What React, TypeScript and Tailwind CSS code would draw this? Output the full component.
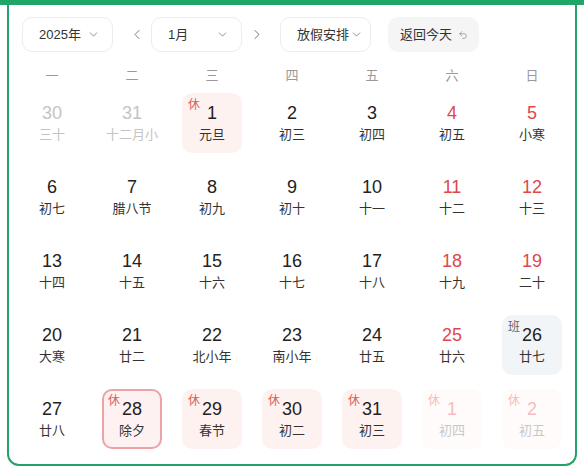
import { ChevronDown, ChevronLeft, ChevronRight, Undo2 } from 'lucide-react';

type Day = {
  n: number;
  lunar: string;
  kind?: 'prev' | 'next';
  weekend?: boolean;
  badge?: '休' | '班';
  selected?: boolean;
};

const weekdays = ['一', '二', '三', '四', '五', '六', '日'];

// January 2025, Monday first
const days: Day[] = [
  { n: 30, lunar: '三十', kind: 'prev' },
  { n: 31, lunar: '十二月小', kind: 'prev' },
  { n: 1, lunar: '元旦', badge: '休' },
  { n: 2, lunar: '初三' },
  { n: 3, lunar: '初四' },
  { n: 4, lunar: '初五', weekend: true },
  { n: 5, lunar: '小寒', weekend: true },
  { n: 6, lunar: '初七' },
  { n: 7, lunar: '腊八节' },
  { n: 8, lunar: '初九' },
  { n: 9, lunar: '初十' },
  { n: 10, lunar: '十一' },
  { n: 11, lunar: '十二', weekend: true },
  { n: 12, lunar: '十三', weekend: true },
  { n: 13, lunar: '十四' },
  { n: 14, lunar: '十五' },
  { n: 15, lunar: '十六' },
  { n: 16, lunar: '十七' },
  { n: 17, lunar: '十八' },
  { n: 18, lunar: '十九', weekend: true },
  { n: 19, lunar: '二十', weekend: true },
  { n: 20, lunar: '大寒' },
  { n: 21, lunar: '廿二' },
  { n: 22, lunar: '北小年' },
  { n: 23, lunar: '南小年' },
  { n: 24, lunar: '廿五' },
  { n: 25, lunar: '廿六', weekend: true },
  { n: 26, lunar: '廿七', badge: '班' },
  { n: 27, lunar: '廿八' },
  { n: 28, lunar: '除夕', badge: '休', selected: true },
  { n: 29, lunar: '春节', badge: '休' },
  { n: 30, lunar: '初二', badge: '休' },
  { n: 31, lunar: '初三', badge: '休' },
  { n: 1, lunar: '初四', badge: '休', kind: 'next' },
  { n: 2, lunar: '初五', badge: '休', kind: 'next' },
];

function Select({ label, wide }: { label: string; wide?: boolean }) {
  return (
    <div
      className={`flex h-[35px] w-[91px] items-center justify-between rounded-[10px] border border-[#ececec] pl-[16px] ${
        wide ? 'pr-[7px]' : 'pr-[12px]'
      } whitespace-nowrap text-[13px] text-[#333]`}
    >
      <span className="whitespace-nowrap">{label}</span>
      <ChevronDown className="h-[13px] w-[13px] shrink-0 text-[#777]" strokeWidth={1.5} />
    </div>
  );
}

function Cell({ d }: { d: Day }) {
  let box = '';
  if (d.selected) box = 'border-2 border-[#eba3a6] bg-[#fdf1f1]';
  else if (d.kind === 'next') box = 'bg-[#fffbfb]';
  else if (d.badge === '休') box = 'bg-[#fef2f1]';
  else if (d.badge === '班') box = 'bg-[#f2f5f7]';

  let numColor = 'text-[#222]';
  let lunarColor = 'text-[#333]';
  if (d.kind === 'prev') {
    numColor = 'text-[#c4c4c4]';
    lunarColor = 'text-[#c4c4c4]';
  } else if (d.kind === 'next') {
    numColor = 'text-[#f5bcc0]';
    lunarColor = 'text-[#c8c8c8]';
  } else if (d.weekend) {
    numColor = 'text-[#e0474c]';
  }

  const badgeColor =
    d.badge === '班' ? 'text-[#666]' : d.kind === 'next' ? 'text-[#f3bcbc]' : 'text-[#e05b5f]';

  return (
    <div className="flex justify-center">
      <div
        className={`relative flex h-[60px] w-[60px] flex-col items-center justify-center rounded-[10px] ${box}`}
      >
        {d.badge && (
          <span
            className={`absolute ${d.selected ? 'left-[4px] top-[4px]' : 'left-[6px] top-[6px]'} text-[12px] leading-none ${badgeColor}`}
          >
            {d.badge}
          </span>
        )}
        <span className={`text-[18px] leading-[22px] ${numColor}`}>{d.n}</span>
        <span className={`mt-[2px] whitespace-nowrap text-[13px] leading-[18px] ${lunarColor}`}>
          {d.lunar}
        </span>
      </div>
    </div>
  );
}

export default function App() {
  return (
    <div
      className="h-[471px] w-[584px] bg-white"
      style={{ fontFamily: '"Liberation Sans", "Noto Sans CJK SC", sans-serif' }}
    >
      <div className="h-[5px] bg-[#1fa666]" />
      <div className="mx-[7px] rounded-b-[12px] border-x-2 border-b-2 border-[#23a36a] pb-[15px] pt-[12px]">
        {/* toolbar */}
        <div className="flex items-center pl-[13px]">
          <Select label="2025年" />
          <button className="ml-[16px] flex w-[16px] justify-center text-[#777]">
            <ChevronLeft className="h-[17px] w-[17px]" strokeWidth={1.5} />
          </button>
          <div className="ml-[6px]">
            <Select label="1月" />
          </div>
          <button className="ml-[7px] flex w-[16px] justify-center text-[#777]">
            <ChevronRight className="h-[17px] w-[17px]" strokeWidth={1.5} />
          </button>
          <div className="ml-[15px]">
            <Select label="放假安排" wide />
          </div>
          <button className="ml-[17px] flex h-[35px] w-[91px] items-center whitespace-nowrap rounded-[10px] bg-[#f5f5f5] pl-[12px] text-[13px] text-[#333]">
            返回今天
            <Undo2 className="ml-[6px] h-[10px] w-[10px] text-[#999]" strokeWidth={2} />
          </button>
        </div>

        {/* weekdays */}
        <div className="mt-[14px] grid grid-cols-7 px-[3px]">
          {weekdays.map((w) => (
            <div key={w} className="text-center text-[13px] leading-[20px] text-[#999]">
              {w}
            </div>
          ))}
        </div>

        {/* days */}
        <div className="mt-[7px] grid grid-cols-7 gap-y-[14px] px-[3px]">
          {days.map((d, i) => (
            <Cell key={i} d={d} />
          ))}
        </div>
      </div>
    </div>
  );
}
